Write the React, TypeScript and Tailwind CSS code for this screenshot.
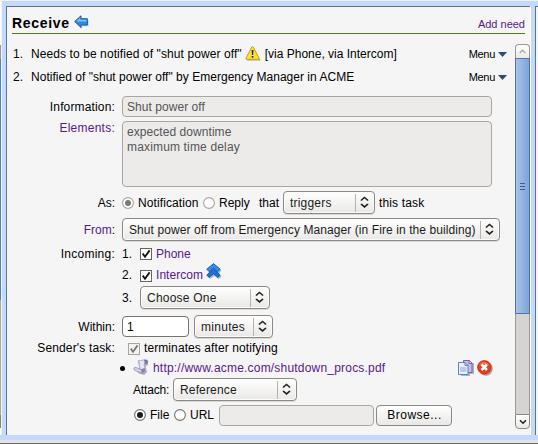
import React from "react";

function Select({ label, className, text = "" }: { label: string; className: string; text?: string }) {
  return (
    <div className={`flex h-[23px] shrink-0 items-center rounded-[4px] border border-[#8e8984] bg-linear-to-b from-white to-[#e9e8e6] shadow-[inset_0_0_0_1px_#fbfbfa,0_1px_0_#dad9d7] ${className}`}>
      <span className={`grow pt-px pl-[6px] text-[#1c1c1c] ${text}`}>{label}</span>
      <span className="h-[18px] w-px bg-[#b5b1ad]" />
      <svg width="18" height="21" viewBox="0 0 18 21" className="shrink-0" fill="none" stroke="#222" strokeWidth="1.6">
        <path d="M5.5 8.7V8L8.5 5.5 11.5 8v.7M5.5 11.7v.7l3 2.5 3-2.5v-.7" />
      </svg>
    </div>
  );
}

function Check({ dim = false, className = "" }: { dim?: boolean; className?: string }) {
  return (
    <svg width="12" height="12" viewBox="0 0 12 12" className={`shrink-0 ${className}`}>
      <rect x=".5" y=".5" width="11" height="11" fill={dim ? "#f3f2f1" : "#fff"} stroke={dim ? "#aaa5a0" : "#69645f"} />
      <path d="M2.7 5.6 5 8.8 9.6 2.4" fill="none" stroke={dim ? "#777" : "#111"} strokeWidth="1.8" />
    </svg>
  );
}

function Radio({ on = false, dim = false, className = "" }: { on?: boolean; dim?: boolean; className?: string }) {
  return (
    <svg width="12" height="12" viewBox="0 0 12 12" className={`shrink-0 ${className}`}>
      <circle cx="6" cy="6" r="5.4" fill="#fff" stroke={dim ? "#a8a4a0" : "#77726d"} strokeWidth="1.1" />
      {on && <circle cx="6" cy="6" r="3" fill={dim ? "#7c7a78" : "#1c1c1c"} />}
    </svg>
  );
}

function Menu() {
  return (
    <div className="flex items-center text-[11px] tracking-[-0.3px]">
      <span className="pb-px">Menu</span>
      <svg width="9" height="5" viewBox="0 0 9 5" className="ml-[3px]"><path d="M0 0H9L4.5 5Z" fill="#2d4a72" /></svg>
    </div>
  );
}

const label = "w-[108px] shrink-0 text-right mr-[7px] pt-px";

export default function App() {
  return (
    <div className="flex h-[444px] w-[538px] flex-col overflow-hidden bg-[#f0f0f0] font-['Liberation_Sans',Arial,sans-serif] text-[12px] leading-[16px] whitespace-nowrap text-black">
      <div className="h-px shrink-0 bg-[#eef3f1]" />
      <div className="flex h-[439px] shrink-0 bg-[#c3d9ff]">
        <div className="flex h-[434px] w-[2px] shrink-0 flex-col border-r border-r-[#f4f4f4] bg-white">
          <div className="h-[44px]" />
          <div className="h-[14px] bg-[#999]" />
          <div className="h-[241px] bg-[#5380b5]" />
          <div className="h-[115px] bg-[#aaa6a2]" />
          <div className="h-[13px] bg-[#85817c]" />
        </div>
        <div className="mt-[5px] ml-[4px] flex h-[429px] w-[524px] shrink-0 flex-col border-t border-l border-[#61757d] bg-[#f5f5f5]">
          <div className="ml-[5px] flex h-[27px] w-[513px] shrink-0 items-center border-b border-b-[#4c7f22] pt-[6px]">
            <h1 className="text-[14px] font-bold tracking-[0.7px]">Receive</h1>
            <svg width="16" height="14" viewBox="0 0 16 14" className="-mt-[2px] ml-[4px]">
              <path d="M2 8 8 14V11.3H14.6V5" fill="#999" opacity=".5" />
              <path d="M.7 6.5 7 .8V3.7H13.4V10H7v2.5Z" fill="#3288df" stroke="#1e5dac" />
              <path d="M2.2 6.4 6.2 2.8V4.8H12.5V6.5Z" fill="#80c1f5" />
            </svg>
            <span className="ml-auto pt-[2px] text-[11px] text-[#551a8b]">Add need</span>
          </div>
          <div className="flex h-[395px] shrink-0">
            <div className="flex w-[508px] shrink-0 flex-col pt-[9px]">
              <div className="flex h-[23px] shrink-0 items-center pr-[8px] pl-[6px]">
                <span className="w-[18px] pb-px">1.</span>
                <span className="pb-px tracking-[0.09px]">Needs to be notified of "shut power off"</span>
                <svg width="16" height="15" viewBox="0 0 16 15" className="-mt-[2px] mr-[4px] ml-[3px]">
                  <path d="M8 2 15.8 14.6H2Z" fill="#777" opacity=".6" />
                  <path d="M6.8 .9Q7.6.3 8.3 1L14 12.2Q14 13.4 13 13.4H1.6Q.4 13.2 1 12.1Z" fill="#fce51e" stroke="#c39c37" />
                  <path d="M6.6 4H8.5L8.1 9H7Z" fill="#222" /><rect x="6.7" y="10" width="1.7" height="1.7" fill="#222" />
                </svg>
                <span className="pb-px">[via Phone, via Intercom]</span>
                <span className="grow" />
                <Menu />
              </div>
              <div className="flex h-[23px] shrink-0 items-center pr-[8px] pl-[6px]">
                <span className="w-[18px] pb-px">2.</span>
                <span className="pb-px tracking-[0.025px]">Notified of "shut power off" by Emergency Manager in ACME</span>
                <span className="grow" />
                <Menu />
              </div>
              <div className="mt-[7px] flex h-[21px] shrink-0 items-center">
                <span className={`${label} tracking-[0.15px]`}>Information:</span>
                <div className="flex h-[21px] w-[370px] items-center rounded-[4px] border border-[#a9a5a1] bg-[#ecebea] pl-[4px] text-[#555]">
                  <span className="pt-px tracking-[0.05px]">Shut power off</span>
                </div>
              </div>
              <div className="mt-[4px] flex h-[66px] shrink-0">
                <span className={`${label} -mt-[2px] tracking-[0.25px] text-[#551a8b]`}>Elements:</span>
                <div className="h-[66px] w-[370px] rounded-[4px] border border-[#a9a5a1] bg-[#ecebea] pt-[3px] pl-[4px] leading-[14px] text-[#555]">
                  <p className="h-[15px] tracking-[0.06px]">expected downtime</p>
                  <p className="h-[15px] tracking-[0.16px]">maximum time delay</p>
                </div>
              </div>
              <div className="mt-[4px] flex h-[23px] shrink-0 items-center">
                <span className={label}>As:</span>
                <Radio on dim className="mt-px" />
                <span className="ml-[4px] w-[65px] pt-px tracking-[0.1px]">Notification</span>
                <Radio dim className="mt-px" />
                <span className="ml-[4px] w-[40px] pt-px">Reply</span>
                <span className="w-[24px] pt-px">that</span>
                <Select label="triggers" className="w-[92px]" text="tracking-[0.2px]" />
                <span className="ml-[4px] pt-px tracking-[0.15px]">this task</span>
              </div>
              <div className="mt-[4px] flex h-[23px] shrink-0 items-center">
                <span className={label}><span className="text-[#551a8b]">From</span>:</span>
                <Select label="Shut power off from Emergency Manager (in Fire in the building)" className="w-[378px]" text="tracking-[0.085px]" />
              </div>
              <div className="mt-[3px] flex h-[20px] shrink-0 items-center">
                <span className="mr-[7px] w-[108px] shrink-0 text-right tracking-[0.25px]">Incoming:</span>
                <span className="w-[18px]">1.</span>
                <Check />
                <span className="ml-[4px] text-[#551a8b]">Phone</span>
              </div>
              <div className="mt-px flex h-[21px] shrink-0 items-center">
                <span className={label} />
                <span className="w-[18px] pb-px">2.</span>
                <Check className="mt-px" />
                <span className="ml-[4px] pb-px tracking-[0.05px] text-[#551a8b]">Intercom</span>
                <svg width="16" height="16" viewBox="0 0 16 16" className="-mt-[9px] ml-[3px]">
                  <path d="M3 7 8.5 3 15.4 7.6 13 10.5 15.4 14 12.5 16 8.5 13 4 16 2 13Z" fill="#777" opacity=".5" />
                  <path d="M.8 12 7.5 6 14.2 12 12 14.4 7.5 10.8 3 14.4Z" fill="#1674dd" stroke="#14509a" strokeWidth=".9" />
                  <path d="M.8 6.2 7.5.6 14.2 6.2 12 8.6 7.5 5.2 3 8.6Z" fill="#2b90f2" stroke="#14569e" strokeWidth=".9" />
                </svg>
              </div>
              <div className="flex h-[23px] shrink-0 items-center">
                <span className={label} />
                <span className="w-[18px] pt-px">3.</span>
                <Select label="Choose One" className="w-[130px]" text="tracking-[0.22px]" />
              </div>
              <div className="mt-[6px] flex h-[23px] shrink-0 items-center">
                <span className={label}>Within:</span>
                <div className="flex h-[21px] w-[67px] items-center rounded-[4px] border border-[#77736f] bg-white pl-[4px]">
                  <span className="pt-px">1</span>
                </div>
                <Select label="minutes" className="ml-[5px] w-[79px]" text="tracking-[0.3px]" />
              </div>
              <div className="mt-px flex h-[20px] shrink-0 items-center">
                <span className="mr-[7px] w-[108px] shrink-0 pb-[2px] text-right tracking-[0.15px]">Sender's task:</span>
                <span className="w-[6px]" />
                <Check dim />
                <span className="ml-[4px] pb-[2px] tracking-[0.09px]">terminates after notifying</span>
              </div>
              <div className="flex h-[19px] shrink-0 items-center pl-[113px]">
                <span className="h-[5px] w-[5px] rounded-full bg-black" />
                <svg width="16" height="16" viewBox="0 0 16 16" className="-mt-[3px] ml-[8px]">
                  <path d="M7 4 15 3V6L12.5 7 14 13 11 16 5 14Z" fill="#666" opacity=".5" />
                  <path d="M5.2 1.8 12 .8 11.2 5.5 12.6 11.8 8.6 14.2 6.8 9.5Z" fill="#e6e6fa" stroke="#9a9ab8" strokeWidth=".7" />
                  <path d="M5.2 1.8Q6.6 2 6.4 4L6.9 10" fill="none" stroke="#b7b7d6" />
                  <path d="M11.4 1Q14.6.2 14.8 2.6 14.6 4.8 12.3 4.6 12.9 2.8 11.4 1Z" fill="#7878a0" stroke="#5d5d80" strokeWidth=".5" />
                  <path d="M.8 9.2Q1.6 7.8 3.4 8.6L7.2 10.2Q9 11.4 8.8 14.2L3.6 12.2Q.4 11.4.8 9.2Z" fill="#d3d3ee" stroke="#8686a6" strokeWidth=".7" />
                  <path d="M7.2 10.4Q9.8 11.2 8.8 14.2L12.2 12 11.6 9Z" fill="#8282ac" />
                </svg>
                <span className="ml-[4px] pb-px tracking-[0.2px] text-[#551a8b]">http://www.acme.com/shutdown_procs.pdf</span>
                <svg width="16" height="16" viewBox="0 0 16 16" className="-mt-[2px] mr-[3px] ml-auto">
                  <path d="M3 5H12V3H16V14H12V16H3Z" fill="#777" opacity=".55" />
                  <path d="M5.5.5H11.5L14 3V12.5H5.5Z" fill="#c9bde5" stroke="#7960a7" />
                  <path d="M11 .5V3.5H14" fill="#e6dff5" stroke="#7960a7" />
                  <path d="M.5 2.5H7L10 5.5V14.5H.5Z" fill="#e6effb" stroke="#6483b5" />
                  <path d="M7 2.5V5.5H10" fill="none" stroke="#6483b5" />
                  <rect x="2" y="7" width="6.5" height="5" fill="#b9cbe8" />
                </svg>
                <svg width="16" height="16" viewBox="0 0 16 16" className="-mt-[2px] mr-[22px]">
                  <circle cx="8.8" cy="8.8" r="7" fill="#666" opacity=".6" />
                  <circle cx="7.3" cy="7.3" r="6.7" fill="#f03812" stroke="#c42d14" strokeWidth=".8" />
                  <path d="M1.8 5.5Q7-2 12.7 5.5Q7 3 1.8 5.5" fill="#ff9070" opacity=".6" />
                  <path d="M4.5 4.5 10 10M10 4.5 4.5 10" stroke="#fff" strokeWidth="2.6" />
                </svg>
              </div>
              <div className="flex h-[23px] shrink-0 items-center pl-[126px]">
                <span className="w-[40px] pt-px tracking-[-0.15px]">Attach:</span>
                <Select label="Reference" className="w-[124px]" text="tracking-[0.15px]" />
              </div>
              <div className="mt-[3px] flex h-[22px] shrink-0 items-center pl-[127px]">
                <Radio on />
                <span className="ml-[4px] w-[24px]">File</span>
                <Radio />
                <span className="ml-[4px] w-[29px]">URL</span>
                <div className="h-[21px] w-[155px] rounded-[4px] border border-[#aaa6a2] bg-[#ecebea]" />
                <div className="ml-[2px] flex h-[21px] w-[76px] items-center justify-center rounded-[4px] border border-[#8e8984] bg-linear-to-b from-white to-[#e9e8e6] pl-px tracking-[0.5px]">Browse...</div>
              </div>
            </div>
            <div className="mt-[10px] flex h-[385px] w-[15px] shrink-0 flex-col">
              <div className="flex h-[14px] shrink-0 items-center justify-center rounded-t-[4px] border border-b-0 border-[#9c9893] bg-linear-to-b from-white to-[#ebeae8]">
                <svg width="7" height="5" viewBox="0 0 7 5"><path d="M.7 4 3.5 1.2 6.3 4" fill="none" stroke="#aaa" strokeWidth="1.4" /></svg>
              </div>
              <div className="flex h-[256px] shrink-0 flex-col items-center justify-center gap-[2px] border border-[#4d76ab] bg-linear-to-r from-[#a7c5ed] to-[#7ea3d5]">
                <i className="h-px w-[5px] bg-[#355f96]" />
                <i className="h-px w-[5px] bg-[#355f96]" />
                <i className="h-px w-[5px] bg-[#355f96]" />
              </div>
              <div className="grow border-x border-[#9c9893] bg-[#d6d4d2]" />
              <div className="flex h-[15px] shrink-0 items-center justify-center rounded-b-[4px] border border-[#8b8782] bg-linear-to-b from-white to-[#ebeae8]">
                <svg width="8" height="6" viewBox="0 0 8 6"><path d="M1 1.2 4 4.2 7 1.2" fill="none" stroke="#222" strokeWidth="1.6" /></svg>
              </div>
            </div>
          </div>
        </div>
        <div className="mt-[5px] h-[429px] w-px bg-white" />
        <div className="w-[4px]" />
        <div className="mt-[5px] h-[429px] w-[3px] border-t border-l border-[#61757d] bg-[#f5f5f5]" />
      </div>
      <div className="h-[3px] shrink-0 bg-[#e4e2df]" />
      <div className="h-px shrink-0 bg-[#666]" />
    </div>
  );
}
